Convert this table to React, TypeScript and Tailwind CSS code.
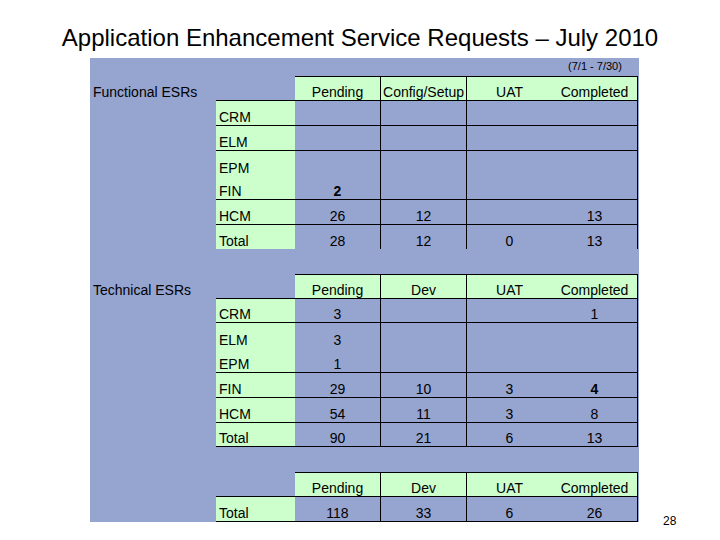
import React from "react";

type RowSpec = { label: string; vals: string[]; h: string; b: boolean; bold?: number[] };

const GRID = "grid grid-cols-[79px_86px_86px_85px_86px]";

function HeaderRow({ heads, h }: { heads: string[]; h: string }) {
  return (
    <div className={`${GRID} ${h} border-b border-black`}>
      <div />
      <div className="bg-[#ccffcc] border-t border-r border-black flex items-end justify-center">{heads[0]}</div>
      <div className="bg-[#ccffcc] border-t border-r border-black flex items-end justify-center">{heads[1]}</div>
      <div className="bg-[#ccffcc] border-t border-black flex items-end justify-center">{heads[2]}</div>
      <div className="bg-[#ccffcc] border-t border-r border-black flex items-end justify-center">{heads[3]}</div>
    </div>
  );
}

function DataRow({ r }: { r: RowSpec }) {
  const cls = (i: number) => (r.bold && r.bold.includes(i) ? "font-bold" : "");
  return (
    <div className={`${GRID} ${r.h} ${r.b ? "border-b border-black" : ""}`}>
      <div className="bg-[#ccffcc] flex items-end pl-[3px]">{r.label}</div>
      <div className={`border-r border-black flex items-end justify-center ${cls(0)}`}>{r.vals[0]}</div>
      <div className={`border-r border-black flex items-end justify-center ${cls(1)}`}>{r.vals[1]}</div>
      <div className={`flex items-end justify-center ${cls(2)}`}>{r.vals[2]}</div>
      <div className={`border-r border-black flex items-end justify-center ${cls(3)}`}>{r.vals[3]}</div>
    </div>
  );
}

function Section({
  title,
  heads,
  headH,
  rows,
  className,
}: {
  title: string;
  heads: string[];
  headH: string;
  rows: RowSpec[];
  className?: string;
}) {
  return (
    <div className={`flex ${className ?? ""}`}>
      <div className="w-[126px]">
        <div className={`${headH} flex items-end pl-[3px] pb-[1px]`}>{title}</div>
      </div>
      <div className="w-[422px]">
        <HeaderRow heads={heads} h={headH} />
        {rows.map((r, i) => (
          <DataRow key={i} r={r} />
        ))}
      </div>
    </div>
  );
}

const functional: RowSpec[] = [
  { label: "CRM", vals: ["", "", "", ""], h: "h-[25px]", b: true },
  { label: "ELM", vals: ["", "", "", ""], h: "h-[25px]", b: true },
  { label: "EPM", vals: ["", "", "", ""], h: "h-[25px]", b: false },
  { label: "FIN", vals: ["2", "", "", ""], h: "h-[24px]", b: true, bold: [0] },
  { label: "HCM", vals: ["26", "12", "", "13"], h: "h-[25px]", b: true },
  { label: "Total", vals: ["28", "12", "0", "13"], h: "h-[24px]", b: false },
];

const technical: RowSpec[] = [
  { label: "CRM", vals: ["3", "", "", "1"], h: "h-[24px]", b: true },
  { label: "ELM", vals: ["3", "", "", ""], h: "h-[25px]", b: false },
  { label: "EPM", vals: ["1", "", "", ""], h: "h-[25px]", b: true },
  { label: "FIN", vals: ["29", "10", "3", "4"], h: "h-[25px]", b: true, bold: [3] },
  { label: "HCM", vals: ["54", "11", "3", "8"], h: "h-[25px]", b: true },
  { label: "Total", vals: ["90", "21", "6", "13"], h: "h-[24px]", b: true },
];

const totals: RowSpec[] = [{ label: "Total", vals: ["118", "33", "6", "26"], h: "h-[25px]", b: true }];

export default function App() {
  return (
    <div className="w-[720px] h-[540px] bg-white text-black font-['Liberation_Sans',Arial,sans-serif] overflow-hidden">
      <div className="pt-[24px] text-center text-[24px] leading-[28px]">
        Application Enhancement Service Requests – July 2010
      </div>
      <div className="flex mt-[6px]">
        <div className="ml-[90px] w-[549px] bg-[#96a4d0] text-[14px] leading-[16px]">
          <div className="h-[18px] pt-[2px] flex">
            <div className="w-[462px]" />
            <div className="w-[86px] text-center text-[11px] leading-[13px]">(7/1 - 7/30)</div>
          </div>
          <Section title="Functional ESRs" heads={["Pending", "Config/Setup", "UAT", "Completed"]} headH="h-[25px]" rows={functional} />
          <Section
            className="mt-[25px]"
            title="Technical ESRs"
            heads={["Pending", "Dev", "UAT", "Completed"]}
            headH="h-[25px]"
            rows={technical}
          />
          <Section className="mt-[25px]" title="" heads={["Pending", "Dev", "UAT", "Completed"]} headH="h-[25px]" rows={totals} />
        </div>
        <div className="self-end ml-[24px] mb-[-6px] text-[12px] leading-[14px]">28</div>
      </div>
    </div>
  );
}
